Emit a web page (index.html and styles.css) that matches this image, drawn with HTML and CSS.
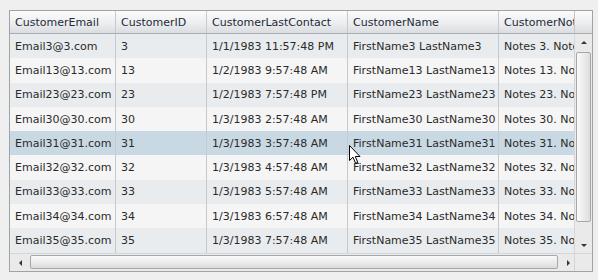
FILE: index.html
```html
<!DOCTYPE html>
<html>
<head>
<meta charset="utf-8">
<link rel="stylesheet" href="styles.css">
</head>
<body>
<div class="grid">
  <div class="header">
    <div class="hcell c1">CustomerEmail</div>
    <div class="hcell c2">CustomerID</div>
    <div class="hcell c3">CustomerLastContact</div>
    <div class="hcell c4">CustomerName</div>
    <div class="hcell c5">CustomerNotes</div>
  </div>
  <div class="hfill"></div>
  <div class="body">
    <div class="row odd"><div class="cell c1">Email3@3.com</div><div class="cell c2">3</div><div class="cell c3">1/1/1983 11:57:48 PM</div><div class="cell c4">FirstName3 LastName3</div><div class="cell c5">Notes 3. Notes</div></div>
    <div class="row"><div class="cell c1">Email13@13.com</div><div class="cell c2">13</div><div class="cell c3">1/2/1983 9:57:48 AM</div><div class="cell c4">FirstName13 LastName13</div><div class="cell c5">Notes 13. Notes</div></div>
    <div class="row odd"><div class="cell c1">Email23@23.com</div><div class="cell c2">23</div><div class="cell c3">1/2/1983 7:57:48 PM</div><div class="cell c4">FirstName23 LastName23</div><div class="cell c5">Notes 23. Notes</div></div>
    <div class="row"><div class="cell c1">Email30@30.com</div><div class="cell c2">30</div><div class="cell c3">1/3/1983 2:57:48 AM</div><div class="cell c4">FirstName30 LastName30</div><div class="cell c5">Notes 30. Notes</div></div>
    <div class="row sel"><div class="cell c1">Email31@31.com</div><div class="cell c2">31</div><div class="cell c3">1/3/1983 3:57:48 AM</div><div class="cell c4">FirstName31 LastName31</div><div class="cell c5">Notes 31. Notes</div></div>
    <div class="row"><div class="cell c1">Email32@32.com</div><div class="cell c2">32</div><div class="cell c3">1/3/1983 4:57:48 AM</div><div class="cell c4">FirstName32 LastName32</div><div class="cell c5">Notes 32. Notes</div></div>
    <div class="row odd"><div class="cell c1">Email33@33.com</div><div class="cell c2">33</div><div class="cell c3">1/3/1983 5:57:48 AM</div><div class="cell c4">FirstName33 LastName33</div><div class="cell c5">Notes 33. Notes</div></div>
    <div class="row"><div class="cell c1">Email34@34.com</div><div class="cell c2">34</div><div class="cell c3">1/3/1983 6:57:48 AM</div><div class="cell c4">FirstName34 LastName34</div><div class="cell c5">Notes 34. Notes</div></div>
    <div class="row odd"><div class="cell c1">Email35@35.com</div><div class="cell c2">35</div><div class="cell c3">1/3/1983 7:57:48 AM</div><div class="cell c4">FirstName35 LastName35</div><div class="cell c5">Notes 35. Notes</div></div>
  </div>
  <div class="vscroll">
    <div class="arrow up"></div>
    <div class="vtrack"><div class="vthumb"></div></div>
    <div class="arrow down"></div>
  </div>
  <div class="hscroll">
    <div class="arrow left"></div>
    <div class="htrack"><div class="hthumb"></div></div>
    <div class="arrow right"></div>
  </div>
  <div class="corner"></div>
</div>
<svg class="cursor" width="13" height="20" viewBox="0 0 13 20">
  <path d="M0.5 0.5 L0.5 15.5 L4 12.2 L6.6 18.3 L8.8 17.4 L6.3 11.5 L11 11.5 Z" fill="#fff" stroke="#000" stroke-width="1"/>
</svg>
</body>
</html>
```

FILE: styles.css
```css
html, body {
  margin: 0;
  padding: 0;
  background: #efefef;
}
body {
  padding: 10px 0 0 9px;
  font-family: "DejaVu Sans", Verdana, sans-serif;
  font-size: 11px;
  color: #2a2a2a;
}
.grid {
  width: 582px;
  height: 260px;
  border: 1px solid #9ea3a8;
  display: grid;
  grid-template-columns: 564px 18px;
  grid-template-rows: 23px 219px 18px;
  background: #f4f4f4;
}
.header {
  display: flex;
  overflow: hidden;
  background: linear-gradient(#fbfbfb, #eceef0 55%, #dadde1);
  border-bottom: 1px solid #a9adb2;
  box-sizing: border-box;
}
.hfill {
  background: linear-gradient(#fbfbfb, #eceef0 55%, #dadde1);
  border-bottom: 1px solid #a9adb2;
  border-left: 1px solid #c3c7cb;
  box-sizing: border-box;
}
.hcell, .cell {
  flex: none;
  box-sizing: border-box;
  white-space: nowrap;
  overflow: hidden;
  padding-left: 5px;
  border-right: 1px solid #c6cacd;
  display: flex;
  align-items: center;
}
.hcell {
  height: 22px;
  color: #1f2a36;
}
.c1 { width: 106px; }
.c2 { width: 91px; }
.c3 { width: 141px; }
.c4 { width: 151px; }
.c5 { width: 75px; border-right: none; }
.body {
  overflow: hidden;
  background: #f3f3f3;
}
.row {
  display: flex;
  height: 24.3px;
  background: #f5f5f5;
}
.row.odd { background: #e9ecee; }
.row.sel { background: #c9d9e3; }
.cell { height: 100%; }
.vscroll {
  display: flex;
  flex-direction: column;
  background: #eaeaea;
  border-left: 1px solid #d6d6d6;
}
.arrow {
  flex: none;
  width: 17px;
  height: 17px;
  position: relative;
}
.arrow::after {
  content: "";
  position: absolute;
  width: 0;
  height: 0;
}
.up::after { left: 6px; top: 7px; border-left: 3px solid transparent; border-right: 3px solid transparent; border-bottom: 3px solid #333; }
.down::after { left: 6px; top: 8px; border-left: 3px solid transparent; border-right: 3px solid transparent; border-top: 3px solid #333; }
.left::after { left: 7px; top: 6px; border-top: 3px solid transparent; border-bottom: 3px solid transparent; border-right: 3px solid #333; }
.right::after { left: 8px; top: 6px; border-top: 3px solid transparent; border-bottom: 3px solid transparent; border-left: 3px solid #333; }
.vtrack {
  flex: 1;
  padding: 1px 1px 0 1px;
}
.vthumb {
  height: 168px;
  border: 1px solid #a4a8ad;
  border-radius: 2px;
  background: linear-gradient(90deg, #fafafa, #ececec 50%, #dedede);
}
.hscroll {
  display: flex;
  background: #eaeaea;
  border-top: 1px solid #d6d6d6;
  box-sizing: border-box;
  padding-left: 2px;
}
.htrack {
  flex: 1;
  padding: 1px 1px 1px 1px;
}
.hthumb {
  width: 528px;
  height: 14px;
  box-sizing: border-box;
  border: 1px solid #a4a8ad;
  border-radius: 2px;
  background: linear-gradient(#fafafa, #ececec 50%, #dcdcdc);
}
.corner {
  background: #eaeaea;
  border-top: 1px solid #d6d6d6;
  border-left: 1px solid #d6d6d6;
}
.cursor {
  position: absolute;
  left: 349px;
  top: 145px;
}
```
